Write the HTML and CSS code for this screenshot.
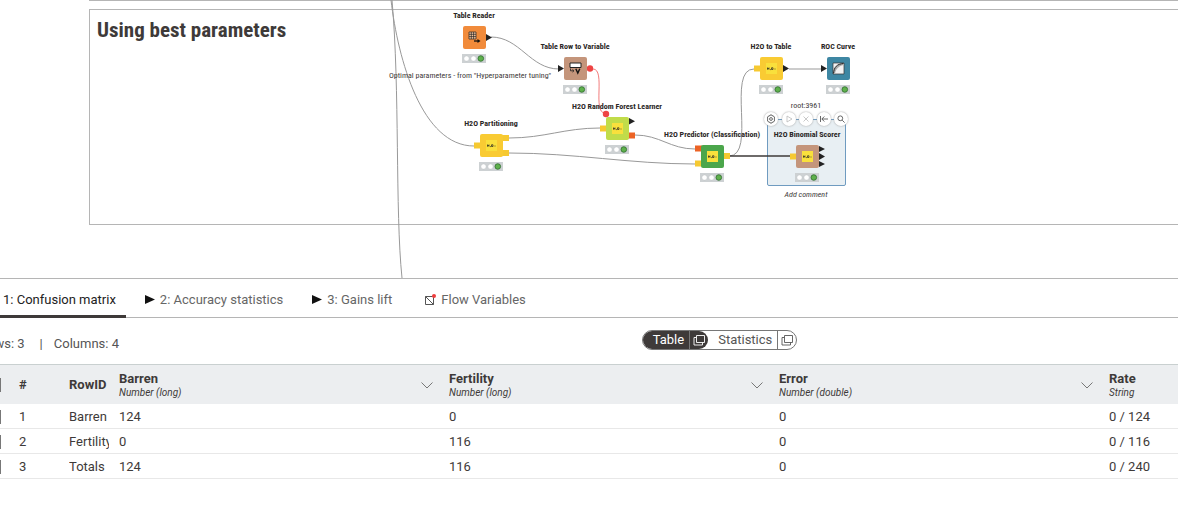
FILE: index.html
```
<!DOCTYPE html>
<html lang="en">
<head>
    <meta charset="UTF-8">
    <meta name="viewport" content="width=device-width, initial-scale=1.0">
    <title>Workflow Editor</title>
    <link rel="stylesheet" href="styles.css">
</head>
<body>

    <!-- Shared icons -->
    <svg class="defs" aria-hidden="true">
        <symbol id="h2o" viewBox="0 0 23 23">
            <rect x="6" y="6" width="11" height="11" fill="#f9e03c"/>
            <path d="M7.500 10.500v2.200M9 10.500v2.200M7.500 11.600h1.500M10 12.600h.9M11.500 10.800h1.500v1.700h-1.500zM14.500 12h1" fill="none" stroke="#222" stroke-width=".7"/>
        </symbol>
        <symbol id="lights" viewBox="0 0 24 9">
            <rect width="24" height="9" fill="#cdd1d3"/>
            <circle cx="4.500" cy="4.500" r="2.600" fill="#fff" stroke="#b9bdbf" stroke-width=".4"/>
            <circle cx="11.500" cy="4.500" r="2.600" fill="#fff" stroke="#b9bdbf" stroke-width=".4"/>
            <circle cx="18.800" cy="4.500" r="2.800" fill="#5fb14c" stroke="#2c6b2c" stroke-width=".8"/>
        </symbol>
        <symbol id="popout" viewBox="0 0 12 12">
            <path d="M3.500 1.500h8v7h-8zM3.500 3.500h-2.500v7.500h8.500v-2.500" fill="none" stroke="currentColor" stroke-width=".9"/>
        </symbol>
        <symbol id="chevron" viewBox="0 0 12 7">
            <path d="M.5.5L6 6 11.500.5" fill="none" stroke="#777"/>
        </symbol>
    </svg>

    <!-- Workflow canvas -->
    <main class="canvas">
        <div class="frame frame-above"></div>
        <section class="frame frame-main">
            <h1>Using best parameters</h1>
        </section>

        <div class="selection"></div>

        <svg class="wires" width="1178" height="278" fill="none" stroke="#999">
            <path d="M391 0C398 60 422 146 474 146"/>
            <path d="M392 0C400 90 395 210 402 278"/>
            <path d="M491 37C520 37 530 69 559 69"/>
            <path d="M509 138C545 138 564 128 600 128"/>
            <path d="M509 153C575 153 630 164 695 164"/>
            <path d="M635 135C660 135 670 149 695 149"/>
            <path d="M729 156C757 156 726 69 754 69"/>
            <path d="M789 69H822"/>
            <path d="M593 69C606 69 592 113 605 113" stroke="#f27c7c"/>
            <path d="M729 156H790" stroke="#3e3a39" stroke-width="1.500"/>
        </svg>

        <p class="annotation">Optimal parameters - from "Hyperparameter tuning"</p>

        <div class="node reader">
            <span class="name">Table Reader</span>
            <svg class="box" viewBox="0 0 41 23">
                <path d="M32 8l6 3.500-6 3.500z" fill="#222"/>
                <rect x="9" width="23" height="23" rx="2" fill="#f18b3b"/>
                <path d="M15 6h7v7h-7z" fill="#f7c7a0"/>
                <path d="M15 6h7v7h-7zM15 8.300h7M15 10.600h7M17.300 6v7M19.600 6v7" fill="none" stroke="#222" stroke-width=".7"/>
                <path d="M20 15h4" stroke="#111" stroke-width="1.300"/>
                <path d="M23.500 13l3 2-3 2z" fill="#111"/>
            </svg>
            <svg class="lights"><use href="#lights"/></svg>
        </div>

        <div class="node variable">
            <span class="name">Table Row to Variable</span>
            <svg class="box" viewBox="0 0 41 23">
                <path d="M3 8l6 3.500-6 3.500z" fill="#222"/>
                <circle cx="35" cy="11.500" r="3.200" fill="#ee4444"/>
                <rect x="9" width="23" height="23" rx="2" fill="#c4957b"/>
                <path d="M15 6h11v4.500H15z" fill="#fff" stroke="#222"/>
                <path d="M15.500 11.500v2.300h3M17.500 12.500l1.500 1.300-1.500 1.300" fill="none" stroke="#222" stroke-width=".8"/>
                <path d="M20.800 11.800l2 4.200 2-4.200" fill="none" stroke="#111" stroke-width="1.400"/>
            </svg>
            <svg class="lights"><use href="#lights"/></svg>
        </div>

        <div class="node partitioning">
            <span class="name">H2O Partitioning</span>
            <svg class="box" viewBox="0 0 41 23">
                <path d="M3 8.500h7v6H3zM31 1h7v6h-7zM31 16h7v6h-7z" fill="#f6c931"/>
                <rect x="9" width="23" height="23" rx="2" fill="#f9cb33"/>
                <use href="#h2o" x="9" width="23" height="23"/>
            </svg>
            <svg class="lights"><use href="#lights"/></svg>
        </div>

        <div class="node learner">
            <span class="name">H2O Random Forest Learner</span>
            <svg class="box" viewBox="0 0 41 23">
                <path d="M3 8.500h7v6H3z" fill="#f6c931"/>
                <path d="M32 1l6 3.300-6 3.300z" fill="#222"/>
                <path d="M31 15.500h7v6h-7z" fill="#ec6325"/>
                <rect x="9" width="23" height="23" rx="2" fill="#c1dc4a"/>
                <circle cx="9" cy="-3" r="3.200" fill="#ee4444"/>
                <use href="#h2o" x="9" width="23" height="23"/>
            </svg>
            <svg class="lights"><use href="#lights"/></svg>
        </div>

        <div class="node predictor">
            <span class="name">H2O Predictor (Classification)</span>
            <svg class="box" viewBox="0 0 41 23">
                <path d="M3 .5h7v6H3z" fill="#ec6325"/>
                <path d="M3 15.500h7v6H3zM31 8h7v6h-7z" fill="#f6c931"/>
                <rect x="9" width="23" height="23" rx="2" fill="#4ba64b"/>
                <use href="#h2o" x="9" width="23" height="23"/>
            </svg>
            <svg class="lights"><use href="#lights"/></svg>
        </div>

        <div class="node to-table">
            <span class="name">H2O to Table</span>
            <svg class="box" viewBox="0 0 41 23">
                <path d="M3 8.500h7v6H3z" fill="#f6c931"/>
                <path d="M32 8l6 3.500-6 3.500z" fill="#222"/>
                <rect x="9" width="23" height="23" rx="2" fill="#f9cb33"/>
                <use href="#h2o" x="9" width="23" height="23"/>
            </svg>
            <svg class="lights"><use href="#lights"/></svg>
        </div>

        <div class="node roc">
            <span class="name">ROC Curve</span>
            <svg class="box" viewBox="0 0 41 23">
                <path d="M3 8l6 3.500-6 3.500z" fill="#222"/>
                <rect x="9" width="23" height="23" rx="2" fill="#3e87a3"/>
                <path d="M15 6h11v11H15z" fill="#f2f2f2" stroke="#333" stroke-width=".7"/>
                <path d="M15.500 16.500C16 10 19 7 25.500 6.500V8C20 9.500 18 12 17 16.500z" fill="#aaa"/>
                <path d="M15.500 16.500C16 10 19 7 25.500 6.500" fill="none" stroke="#222"/>
            </svg>
            <svg class="lights"><use href="#lights"/></svg>
        </div>

        <div class="node scorer">
            <span class="name">H2O Binomial Scorer</span>
            <svg class="box" viewBox="0 0 41 23">
                <path d="M3 8.500h7v6H3z" fill="#f6c931"/>
                <path d="M32 1l6 3-6 3zM32 8l6 3.500-6 3.500zM32 16l6 3-6 3z" fill="#222"/>
                <rect x="9" width="23" height="23" rx="2" fill="#c4957b"/>
                <use href="#h2o" x="9" width="23" height="23"/>
            </svg>
            <svg class="lights"><use href="#lights"/></svg>
        </div>

        <span class="node-id">root:3961</span>
        <div class="actions">
            <button type="button" aria-label="Configure">
                <svg viewBox="0 0 14 14"><path d="M6 3h2l.5 1 1.300.2.900 1.800-.6 1 .6 1-.9 1.800-1.300.2-.5 1H6l-.5-1-1.300-.2L3.300 8l.6-1-.6-1 .9-1.800L5.500 4z"/><circle cx="7" cy="7" r="1.400"/></svg>
            </button>
            <button type="button" aria-label="Execute" disabled>
                <svg viewBox="0 0 14 14"><path d="M5 4l5 3-5 3z"/></svg>
            </button>
            <button type="button" aria-label="Cancel" disabled>
                <svg viewBox="0 0 14 14"><path d="M4.500 4.500l5 5M9.500 4.500l-5 5"/></svg>
            </button>
            <button type="button" aria-label="Reset">
                <svg viewBox="0 0 14 14"><path d="M3.500 4v6M11 7H5M7.300 4.500L4.800 7l2.500 2.500"/></svg>
            </button>
            <button type="button" aria-label="Open view">
                <svg viewBox="0 0 14 14"><circle cx="6.300" cy="6.300" r="2.400"/><path d="M8.200 8.200l2.400 2.400"/></svg>
            </button>
        </div>
        <em class="comment">Add comment</em>
    </main>

    <!-- Node output panel -->
    <section class="output">
        <nav class="tabs">
            <button type="button" class="active">1: Confusion matrix</button>
            <button type="button"><svg width="10" height="10"><path d="M0 0l10 4.500L0 9z" fill="#111"/></svg>2: Accuracy statistics</button>
            <button type="button"><svg width="10" height="10"><path d="M0 0l10 4.500L0 9z" fill="#111"/></svg>3: Gains lift</button>
            <button type="button" class="flow"><svg width="12" height="12" fill="none" stroke="#555"><path d="M1.500 2.500h8v8h-8zM1.500 2.500l8 8"/><circle cx="10" cy="2" r="2" fill="#ee3e3e" stroke="none"/></svg>Flow Variables</button>
        </nav>

        <div class="toolbar">
            <div class="info"><span class="rows">Rows: 3</span><span>|</span><span>Columns: 4</span></div>
            <div class="switch">
                <input type="radio" name="view" id="viewTable" checked>
                <label for="viewTable">Table</label>
                <button type="button" class="dark" aria-label="Open table in new window"><svg><use href="#popout"/></svg></button>
                <input type="radio" name="view" id="viewStats">
                <label for="viewStats">Statistics</label>
                <button type="button" aria-label="Open statistics in new window"><svg><use href="#popout"/></svg></button>
            </div>
        </div>

        <table>
            <colgroup>
                <col class="col-check"><col class="col-index"><col class="col-id">
                <col class="col-data"><col class="col-data"><col class="col-data"><col>
            </colgroup>
            <thead>
                <tr>
                    <th><input type="checkbox" aria-label="Select all rows"></th>
                    <th>#</th>
                    <th>RowID</th>
                    <th><div class="head"><div>Barren<small>Number (long)</small></div><svg><use href="#chevron"/></svg></div></th>
                    <th><div class="head"><div>Fertility<small>Number (long)</small></div><svg><use href="#chevron"/></svg></div></th>
                    <th><div class="head"><div>Error<small>Number (double)</small></div><svg><use href="#chevron"/></svg></div></th>
                    <th><div class="head"><div>Rate<small>String</small></div></div></th>
                </tr>
            </thead>
            <tbody>
                <tr>
                    <td><input type="checkbox" aria-label="Select row 1"></td>
                    <td>1</td><td><div class="row-id">Barren</div></td><td>124</td><td>0</td><td>0</td><td>0 / 124</td>
                </tr>
                <tr>
                    <td><input type="checkbox" aria-label="Select row 2"></td>
                    <td>2</td><td><div class="row-id">Fertility</div></td><td>0</td><td>116</td><td>0</td><td>0 / 116</td>
                </tr>
                <tr>
                    <td><input type="checkbox" aria-label="Select row 3"></td>
                    <td>3</td><td><div class="row-id">Totals</div></td><td>124</td><td>116</td><td>0</td><td>0 / 240</td>
                </tr>
            </tbody>
        </table>
    </section>

</body>
</html>
```
FILE: styles.css
```
body {
    margin: 0;
    overflow: hidden;
    font-family: Roboto, sans-serif;
    font-size: 13px;
    line-height: 16px;
    color: #3e3a39;
    background-color: white;
}
button {
    font: inherit;
    color: inherit;
    background: none;
    border: none;
    padding: 0;
    cursor: pointer;
}
.defs {
    position: absolute;
    width: 0;
    height: 0;
}

/* Canvas */
.canvas {
    position: relative;
    height: 278px;
    overflow: hidden;
    border-bottom: 1px solid #b5b5b5;
    font-family: "Roboto Condensed", Roboto, sans-serif;
    font-size: 8px;
    line-height: 12px;
}
.frame {
    position: absolute;
    box-sizing: border-box;
    left: 89px;
    right: -2px;
    border: 1px solid #b5b5b5;
}
.frame-above {
    top: -20px;
    height: 21px;
}
.frame-main {
    top: 9px;
    height: 216px;
    padding: 7px;
}
.frame h1 {
    margin: 0;
    font-size: 21px;
    line-height: 26px;
}
.wires {
    position: absolute;
    top: 0;
    left: 0;
}
.annotation {
    position: absolute;
    left: 389px;
    top: 70px;
    margin: 0;
    white-space: nowrap;
}
.node {
    position: absolute;
    width: 120px;
    margin-left: -60px;
    display: flex;
    flex-direction: column;
    align-items: center;
    gap: 4px;
}
.node .name {
    font-weight: bold;
    color: #2b2726;
    white-space: nowrap;
}
.node .box {
    width: 41px;
    height: 23px;
    overflow: visible;
}
.node .lights {
    width: 24px;
    height: 9px;
    padding-top: 1px;
}
.reader { left: 474px; top: 10px; }
.variable { left: 575px; top: 41px; }
.partitioning { left: 491px; top: 118px; }
.learner { left: 617px; top: 101px; }
.predictor { left: 712px; top: 129px; }
.to-table { left: 771px; top: 41px; }
.roc { left: 838px; top: 41px; }
.scorer { left: 807px; top: 129px; }

.selection {
    position: absolute;
    left: 767px;
    top: 119px;
    width: 77px;
    height: 65px;
    border: 1px solid #6f9bc0;
    border-radius: 2px;
    background-color: #e8eff3;
}
.node-id, .comment {
    position: absolute;
    left: 766px;
    width: 80px;
    text-align: center;
}
.node-id {
    top: 100px;
}
.comment {
    top: 189px;
}
.actions {
    position: absolute;
    left: 764px;
    top: 112px;
    width: 84px;
    display: flex;
    justify-content: space-between;
}
.actions button {
    width: 14px;
    height: 14px;
    box-sizing: border-box;
    border-radius: 50%;
    background-color: white;
    box-shadow: 0 0 2px #999;
    display: flex;
}
.actions svg {
    width: 14px;
    height: 14px;
    fill: none;
    stroke: #444;
    stroke-width: 0.8;
}
.actions button:disabled svg {
    stroke: #bbb;
}

/* Output panel, scrolled a little to the right */
.output {
    margin-left: -24px;
    margin-right: -285px;
}
.tabs {
    display: flex;
    height: 38px;
    padding-left: 17px;
    gap: 9px;
    border-bottom: 1px solid #b5b5b5;
}
.tabs button {
    display: flex;
    align-items: center;
    gap: 5px;
    height: 39px;
    box-sizing: border-box;
    padding: 5px 10px 0;
    color: #666;
    border-bottom: 3px solid transparent;
}
.tabs .active {
    color: #222;
    border-bottom-color: #3e3a39;
}
.tabs .flow {
    margin-left: 3px;
}
.toolbar {
    display: grid;
    grid-template-columns: 1fr auto 1fr;
    align-items: center;
    height: 44px;
    padding-bottom: 2px;
}
.info {
    display: flex;
    gap: 11px;
    padding: 8px 0 0 3px;
    color: #555;
}
.info .rows {
    margin-right: 4px;
}
.switch {
    display: flex;
    align-items: center;
    height: 18px;
    border: 1px solid #777;
    border-radius: 10px;
    overflow: hidden;
    color: #555;
}
.switch input {
    position: absolute;
    opacity: 0;
}
.switch label {
    padding: 1px 5px 1px 10px;
}
.switch input:checked + label {
    color: white;
    background-color: #3e3a39;
}
.switch button {
    display: flex;
    align-items: center;
    justify-content: center;
    width: 19px;
    height: 18px;
    border-left: 1px solid #777;
}
.switch .dark {
    color: white;
    background-color: #3e3a39;
    border-radius: 0 9px 9px 0;
}
.switch svg {
    width: 12px;
    height: 12px;
}

/* Table */
table {
    width: 100%;
    table-layout: fixed;
    border-collapse: collapse;
}
.col-check { width: 38px; }
.col-index { width: 50px; }
.col-id { width: 50px; }
.col-data { width: 330px; }
th, td {
    padding: 1px 0 0 5px;
    text-align: left;
    white-space: nowrap;
    overflow: hidden;
}
th {
    height: 38px;
    background-color: #eceef0;
    border-top: 1px solid #c9d0d0;
}
td {
    height: 23px;
    border-bottom: 1px solid #e8e8e8;
}
.row-id {
    width: 40px;
    overflow: hidden;
}
th small {
    display: block;
    font-size: 10px;
    line-height: 12px;
    font-weight: normal;
    font-style: italic;
}
.head {
    display: flex;
    align-items: center;
    justify-content: space-between;
    padding-right: 11px;
}
.head svg {
    width: 12px;
    height: 7px;
}
table input {
    display: block;
    appearance: none;
    width: 14px;
    height: 14px;
    margin: 0 0 0 6px;
    border: 1px solid #777;
    background-color: white;
}
```
